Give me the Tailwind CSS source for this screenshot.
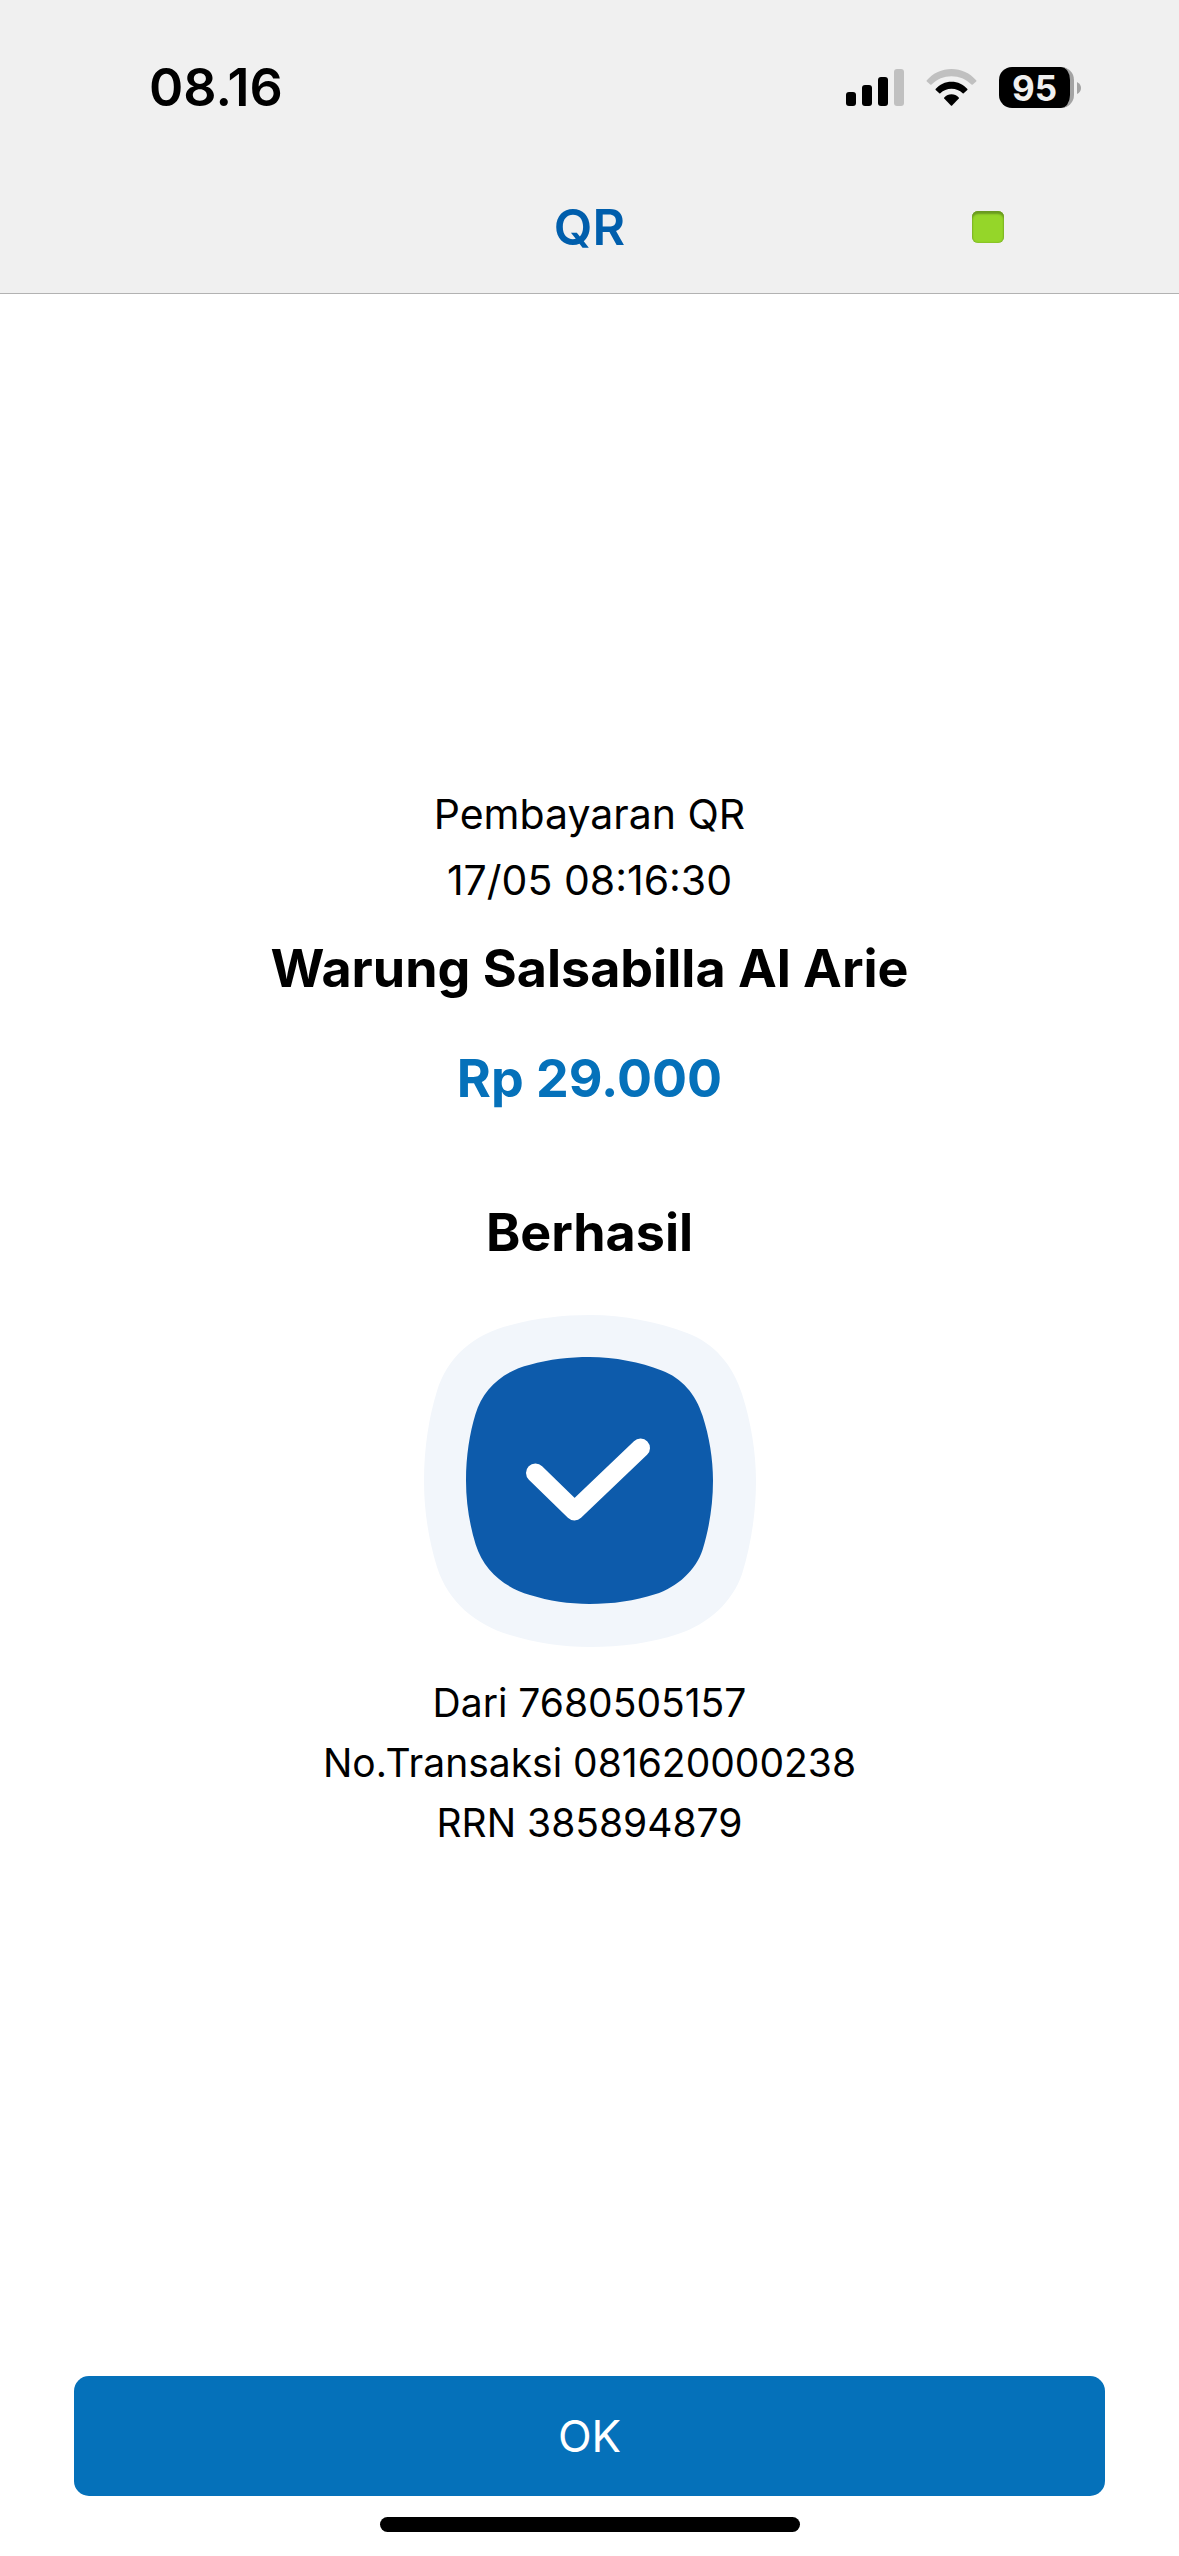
<!DOCTYPE html>
<html lang="id">
<head>
<meta charset="utf-8">
<meta name="viewport" content="width=device-width, initial-scale=1">
<title>QR</title>
<script src="https://cdn.jsdelivr.net/npm/@tailwindcss/browser@4"></script>
</head>
<body class="flex min-h-screen flex-col bg-white font-['Inter',sans-serif] text-black">
  <header class="border-b border-[#b2b2b2] bg-[#f0f0f0]">
    <!-- Status bar -->
    <div class="flex h-40 items-center justify-between pt-[15px] pr-[98px] pl-[149px]">
      <span class="text-[52px] leading-[60px] font-semibold">08.16</span>
      <div class="flex items-center gap-[22px]">
        <svg class="h-[37px] w-[58px]" viewBox="0 0 58 37" aria-hidden="true">
          <rect x="0" y="23" width="10" height="14" rx="3"/>
          <rect x="16" y="16" width="10" height="21" rx="3"/>
          <rect x="32" y="8" width="10" height="29" rx="3"/>
          <rect x="48" y="0" width="10" height="37" rx="3" fill="#c0c0c0"/>
        </svg>
        <svg class="h-[37px] w-[51px]" viewBox="0 0 51 37" aria-hidden="true">
          <path d="M.6 11.6C7 4 15.800 0 25.500 0S44 4 50.400 11.600Q50.600 12 50.200 12.400L46.500 15.700Q46 16 45.500 15.600C40 10 33 7.200 25.500 7.200S11 10 5.500 15.600Q5 16 4.500 15.700L.8 12.400Q.4 12 .6 11.600Z" fill="#c0c0c0"/>
          <path d="M9.600 20C13.500 15.400 19.200 12.700 25.500 12.700S37.500 15.400 41.400 20Q41.700 20.500 41.300 20.900L37.700 24.300Q37.200 24.700 36.700 24.300C33.600 21.400 29.800 19.800 25.500 19.800S17.400 21.400 14.300 24.300Q13.800 24.700 13.300 24.300L9.700 20.900Q9.300 20.500 9.600 20Z"/>
          <path d="M18.300 28.500C20.300 26.500 22.800 25.300 25.500 25.300S30.700 26.500 32.700 28.500Q33.200 29 32.800 29.500L26.100 36.500Q25.500 37.100 24.900 36.500L18.200 29.500Q17.800 29 18.300 28.500Z"/>
        </svg>
        <div class="flex items-center gap-[3px]">
          <div class="flex h-[41px] w-[75px] items-center justify-center overflow-hidden rounded-[13px] border-r-4 border-[#a3a3a3] bg-black text-[35px] leading-10 font-bold text-[#f0f0f0]">95</div>
          <svg class="h-3 w-1" viewBox="0 0 4 12" aria-hidden="true"><path d="M0 0Q4 2 4 6T0 12Z" fill="#a3a3a3"/></svg>
        </div>
      </div>
    </div>
    <!-- Title bar -->
    <div class="grid h-[133px] grid-cols-[1fr_auto_1fr] items-center px-[175px]">
      <h1 class="col-start-2 text-[50px] leading-[60px] font-semibold text-[#005eac]">QR</h1>
      <span class="size-8 justify-self-end rounded-md bg-[#95d629] shadow-[inset_0_3px_2px_#6a9a20,inset_0_0_2px_#6a9a20]"></span>
    </div>
  </header>

  <main class="flex grow flex-col items-center justify-center text-center">
    <p class="text-[41px] leading-[66px]">Pembayaran QR</p>
    <p class="text-[41px] leading-[66px]">17/05 08:16:30</p>
    <h2 class="mt-6 text-[52px] leading-[64px] font-bold">Warung Salsabilla Al Arie</h2>
    <p class="mt-[46px] text-[52px] leading-[64px] font-bold text-[#0571ba]">Rp 29.000</p>
    <p class="mt-[90px] text-[52px] leading-[64px] font-bold">Berhasil</p>
    <svg class="mt-[50px] size-[332px]" viewBox="0 0 332 332" fill="none" aria-hidden="true">
      <defs>
        <path id="squircle" d="M0 166C0 133 5 102 12.700 77C23 42 50 19 86 10.300C112 3 140 0 166 0C200 0 234 7 263 18C290 28 309 50 318 79C327 107 332 137 332 166C332 198 327 230 318 259C309 286 285 309 254 319C227 328 197 332 166 332C138 332 112 328 86 320C52 310 24 287 13 252C5 226 0 197 0 166Z"/>
      </defs>
      <use href="#squircle" fill="#f2f6fb"/>
      <use href="#squircle" fill="#0d5bab" transform="translate(42 42) scale(.744)"/>
      <path d="M111.500 158L150.500 196L216.500 133" stroke="#fff" stroke-width="19" stroke-linecap="round" stroke-linejoin="round"/>
    </svg>
    <div class="mt-[26px] text-[39px] leading-[60px]">
      <p>Dari 7680505157</p>
      <p>No.Transaksi 081620000238</p>
      <p>RRN 385894879</p>
    </div>
  </main>

  <footer class="flex flex-col items-center px-[74px] pt-9 pb-6">
    <button type="button" class="h-[120px] w-full rounded-[15px] bg-[#0571ba] text-[44px] leading-[56px] text-white">OK</button>
    <div class="mt-[21px] h-[15px] w-[420px] rounded-full bg-black"></div>
  </footer>
</body>
</html>
